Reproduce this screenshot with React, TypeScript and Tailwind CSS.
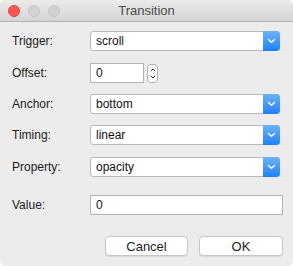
import { ReactNode } from "react";

// Small blue dropdown chevron
function Chevron() {
  return (
    <svg width="9" height="6" viewBox="0 0 9 6" fill="none">
      <path d="M1.5 1.5 L4.5 4.3 L7.5 1.5" stroke="white" strokeWidth="1.4" strokeLinecap="round" strokeLinejoin="round" />
    </svg>
  );
}

function Select({ value }: { value: string }) {
  return (
    <div className="flex h-full w-[190px] rounded-[3px] border border-[#b9b9b9] bg-white">
      <div className="flex flex-1 items-center pl-[5px] text-[12px] text-[#111]">{value}</div>
      <div className="-my-px -mr-px flex w-[17px] items-center justify-center rounded-r-[4px] bg-gradient-to-b from-[#6ab2fb] to-[#1a7ffa]">
        <Chevron />
      </div>
    </div>
  );
}

function Row({ label, top, children }: { label: string; top: string; children: ReactNode }) {
  return (
    <div className={`flex h-[20px] items-center ${top}`}>
      <div className="w-[78px] text-[12px] text-[#1c1c1c]">{label}</div>
      {children}
    </div>
  );
}

function Light({ color }: { color: string }) {
  return <div className={`h-[12px] w-[12px] rounded-full border ${color}`} />;
}

export default function App() {
  return (
    <div
      className="h-[266px] w-[293px] overflow-hidden rounded-[5px] bg-[#ececec]"
      style={{ fontFamily: '"Liberation Sans", Arial, sans-serif' }}
    >
      {/* Title bar */}
      <div className="relative flex h-[22px] items-center border-b border-[#b3b3b3] bg-gradient-to-b from-[#ebebeb] to-[#d5d5d5] pl-[8px]">
        <div className="flex gap-[8px]">
          <Light color="border-[#e2463f] bg-[#fc5753]" />
          <Light color="border-[#c4c4c4] bg-[#d2d2d2]" />
          <Light color="border-[#c4c4c4] bg-[#d2d2d2]" />
        </div>
        <div className="absolute inset-0 flex items-center justify-center text-[13px] text-[#4a4a4a]">Transition</div>
      </div>

      {/* Form */}
      <div className="flex flex-col pl-[12px] pt-[9px]">
        <Row label="Trigger:" top="">
          <Select value="scroll" />
        </Row>
        <Row label="Offset:" top="mt-[12px]">
          <div className="flex h-full w-[54px] items-center border border-[#b4b4b4] bg-white pl-[5px] text-[12px] text-[#111]">0</div>
          <div className="ml-[3px] flex h-[19px] w-[11px] flex-col items-center justify-center gap-[3px] rounded-[4px] border border-[#b4b4b4] bg-white">
            <svg width="6" height="4" viewBox="0 0 6 4" fill="none">
              <path d="M1 3 L3 1 L5 3" stroke="#333" strokeWidth="1" strokeLinecap="round" />
            </svg>
            <svg width="6" height="4" viewBox="0 0 6 4" fill="none">
              <path d="M1 1 L3 3 L5 1" stroke="#333" strokeWidth="1" strokeLinecap="round" />
            </svg>
          </div>
        </Row>
        <Row label="Anchor:" top="mt-[11px]">
          <Select value="bottom" />
        </Row>
        <Row label="Timing:" top="mt-[11px]">
          <Select value="linear" />
        </Row>
        <Row label="Property:" top="mt-[12px]">
          <Select value="opacity" />
        </Row>
        <Row label="Value:" top="mt-[18px]">
          <div className="flex h-full w-[193px] items-center border border-[#b4b4b4] bg-white pl-[5px] text-[12px] text-[#111]">0</div>
        </Row>

        {/* Buttons */}
        <div className="mt-[21px] flex gap-[11px] pl-[93px]">
          <button className="h-[20px] w-[83px] rounded-[4px] border border-[#c6c6c6] bg-white text-[13px] text-[#1c1c1c] shadow-[0_1px_0_rgba(0,0,0,0.08)]">
            Cancel
          </button>
          <button className="h-[20px] w-[84px] rounded-[4px] border border-[#c6c6c6] bg-white text-[13px] text-[#1c1c1c] shadow-[0_1px_0_rgba(0,0,0,0.08)]">
            OK
          </button>
        </div>
      </div>
    </div>
  );
}
